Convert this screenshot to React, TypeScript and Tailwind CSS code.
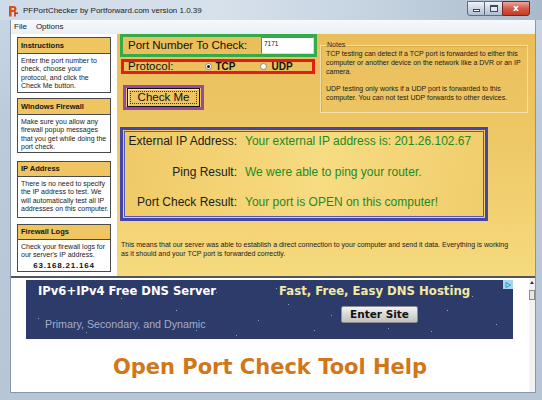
import React from "react";

function TitleIcon() {
  return (
    <svg width="11" height="12" viewBox="0 0 11 12">
      <path d="M1 1h4.5a3 3 0 0 1 0 6H3.6v4.5H1z" fill="#d6501c" />
      <path d="M3.6 3h1.7a1 1 0 0 1 0 2H3.6z" fill="#f6d4a8" />
      <path d="M7 6.5v5M7 8.2h3" stroke="#b8361a" strokeWidth="1.6" fill="none" />
    </svg>
  );
}

function SideBox({
  title,
  headH,
  bodyH,
  lines,
  extra,
  className,
}: {
  title: string;
  headH: number;
  bodyH: number;
  lines: string[];
  extra?: React.ReactNode;
  className?: string;
}) {
  return (
    <div className={"w-[94px] border border-[#4a4a4a] flex flex-col " + (className ?? "")}>
      <div
        className="bg-[#efc562] border-b border-[#4a4a4a] flex items-center pl-[3px] text-[7.5px] font-bold text-[#151515] whitespace-nowrap"
        style={{ height: headH }}
      >
        {title}
      </div>
      <div
        className="bg-white pl-[3px] pt-[3px] text-[7px] leading-[8.3px] text-[#1a1a1a] whitespace-nowrap"
        style={{ height: bodyH }}
      >
        {lines.map((l, i) => (
          <div key={i}>{l}</div>
        ))}
        {extra}
      </div>
    </div>
  );
}

const stars: [number, number][] = [
  [95, 18], [150, 30], [190, 12], [232, 40], [262, 24], [305, 35], [331, 9], [362, 48],
  [421, 30], [446, 16], [470, 44], [60, 52], [121, 46], [405, 51], [288, 50], [210, 55],
  [170, 50], [250, 8], [12, 38], [478, 8],
];

export default function App() {
  return (
    <div className="w-[542px] h-[400px] overflow-hidden flex flex-col bg-[linear-gradient(to_bottom,#c9d7e5,#bccbdb_30%,#b6c6d6)] font-['Liberation_Sans',Arial,sans-serif] text-[#111]">
      {/* Title bar */}
      <div className="h-[20px] flex items-start shrink-0 bg-[linear-gradient(to_right,#cfdbe8,#d7e1ec_40%,#c4d2e0_70%,#a9bacb)]">
        <div className="flex items-center h-[20px] pl-[8px] pt-[2px] gap-[4px] flex-1">
          <TitleIcon />
          <span className="text-[8px] text-[#1b1b1b] whitespace-nowrap">
            PFPortChecker by Portforward.com version 1.0.39
          </span>
        </div>
        <div className="flex mt-[1px] mr-[12px] h-[15px]">
          <div className="w-[18px] h-full rounded-bl-[3px] border border-[#5c6c82] bg-[linear-gradient(to_bottom,#eef3f8,#cdd8e4_50%,#aebfd2)] flex items-end justify-center pb-[3px]">
            <div className="w-[7px] h-[3px] bg-white border border-[#3e4a5c]" />
          </div>
          <div className="w-[17px] h-full border-y border-[#5c6c82] bg-[linear-gradient(to_bottom,#eef3f8,#cdd8e4_50%,#aebfd2)] flex items-center justify-center">
            <div className="w-[8px] h-[7px] border border-[#3e4a5c] border-t-2 bg-white/40" />
          </div>
          <div className="w-[28px] h-full rounded-br-[3px] border border-[#6e2a22] bg-[linear-gradient(to_bottom,#eaa99b,#d65a45_50%,#c43b27)] flex items-center justify-center">
            <span className="text-white text-[9px] font-bold leading-none font-['DejaVu_Sans']">x</span>
          </div>
        </div>
      </div>

      {/* Client area */}
      <div className="ml-[10px] w-[526px] h-[373px] flex flex-col border-l border-r border-b border-[#8596a8] bg-white shrink-0">
        {/* Menu */}
        <div className="h-[14px] flex items-center gap-[9px] pl-[3px] pb-[1px] text-[8px] text-[#1a1a1a] bg-[linear-gradient(to_bottom,#f7f9fb,#eaeff5)] shrink-0">
          <span>File</span>
          <span>Options</span>
        </div>

        {/* Top pane */}
        <div className="h-[242px] flex shrink-0">
          {/* Left column */}
          <div className="w-[106px] bg-white flex flex-col pl-[6px] pt-[3px]">
            <SideBox
              title="Instructions"
              headH={16}
              bodyH={38}
              lines={["Enter the port number to", "check, choose your", "protocol, and click the", "Check Me button."]}
            />
            <SideBox
              className="mt-[5px]"
              title="Windows Firewall"
              headH={16}
              bodyH={37}
              lines={["Make sure you allow any", "firewall popup messages", "that you get while doing the", "port check."]}
            />
            <SideBox
              className="mt-[8px]"
              title="IP Address"
              headH={15}
              bodyH={40}
              lines={["There is no need to specify", "the IP address to test. We", "will automatically test all IP", "addresses on this computer."]}
            />
            <SideBox
              className="mt-[6px]"
              title="Firewall Logs"
              headH={15}
              bodyH={31}
              lines={["Check your firewall logs for", "our server's IP address."]}
              extra={
                <div className="text-center pr-[3px] mt-[2px] text-[8px] font-bold tracking-[0.8px] text-[#111]">
                  63.168.21.164
                </div>
              }
            />
          </div>

          {/* Main golden area */}
          <div className="flex-1 flex flex-col bg-[linear-gradient(to_bottom,#e9be5a,#eec867_45%,#f6da7e)]">
            <div className="flex">
              <div className="flex flex-col pl-[3px] w-[200px]">
                <div className="h-[23px] w-[197px] border-[3px] border-[#34ab4a] flex items-stretch justify-between">
                  <span className="pl-[5px] self-center text-[11.5px] text-[#111] whitespace-nowrap">
                    Port Number To Check:
                  </span>
                  <div className="w-[53px] bg-white border border-[#7a7a7a] border-r-[#dcdcdc] border-b-[#dcdcdc] text-[6.5px] pl-[2px] pt-[3px] leading-none text-[#111]">
                    7171
                  </div>
                </div>
                <div className="mt-[2px] ml-[1px] h-[15px] w-[194px] border-[3px] border-[#e21d1a] flex items-center text-[#111]">
                  <span className="w-[81px] pl-[4px] text-[11.5px] leading-[9px] whitespace-nowrap">Protocol:</span>
                  <div className="w-[7px] h-[7px] rounded-full border border-[#8a8a8a] bg-white flex items-center justify-center">
                    <div className="w-[3px] h-[3px] rounded-full bg-[#111]" />
                  </div>
                  <span className="ml-[3.5px] text-[10px] font-bold leading-[9px]">TCP</span>
                  <div className="ml-[24px] w-[7px] h-[7px] rounded-full border border-[#8a8a8a] bg-white" />
                  <span className="ml-[5px] text-[10px] font-bold leading-[9px]">UDP</span>
                </div>
                <div className="mt-[11px] ml-[3px] h-[25px] w-[81px] border-[3px] border-[#9a4a9e] flex items-center pl-[1px]">
                  <div className="w-[73px] h-[19px] border border-[#111] bg-[#ecc462] shadow-[inset_1px_1px_0_#fbe8b8] p-[2px]">
                    <div className="w-full h-full border border-dotted border-[#333] flex items-center justify-center text-[11.5px] leading-none">
                      Check Me
                    </div>
                  </div>
                </div>
              </div>
              <fieldset className="mt-[7px] ml-[3px] w-[208px] h-[72px] border border-[#f4e0a6] shadow-[inset_1px_1px_0_#d9ad4c] pl-[5px] pt-[1px]">
                <legend className="px-[1px] text-[7px] leading-[8px] text-[#333]">Notes</legend>
                <div className="text-[7px] leading-[8.8px] text-[#1a1a1a] whitespace-nowrap">
                  <div>TCP testing can detect if a TCP port is forwarded to either this</div>
                  <div>computer or another device on the network like a DVR or an IP</div>
                  <div>camera.</div>
                  <div>&nbsp;</div>
                  <div>UDP testing only works if a UDP port is forwarded to this</div>
                  <div>computer. You can not test UDP forwards to other devices.</div>
                </div>
              </fieldset>
            </div>

            <div className="mt-[14px] ml-[3px] w-[368px] h-[94px] border-[3px] border-[#4646aa] p-px">
              <div className="w-full h-full border border-[#5656b4] bg-[linear-gradient(100deg,#efc966,#f7dc82_55%,#f0cd6c)] flex flex-col pt-[1px] gap-[14.5px] text-[12px] leading-[16px]">
                {[
                  ["External IP Address:", "Your external IP address is: 201.26.102.67"],
                  ["Ping Result:", "We were able to ping your router."],
                  ["Port Check Result:", "Your port is OPEN on this computer!"],
                ].map(([l, v]) => (
                  <div key={l} className="flex whitespace-nowrap">
                    <span className="w-[112px] text-right text-[#1c1c1c]">{l}</span>
                    <span className="ml-[8px] text-[#1f8a1f]">{v}</span>
                  </div>
                ))}
              </div>
            </div>

            <div className="mt-[20px] ml-[4px] text-[7px] leading-[8.7px] text-[#1a1a1a] whitespace-nowrap">
              <div>
                This means that our server was able to establish a direct connection to your computer and send it data. Everything is working
              </div>
              <div>as it should and your TCP port is forwarded correctly.</div>
            </div>
          </div>
        </div>

        {/* Splitter */}
        <div className="h-[2px] bg-[#4d5661] shrink-0" />

        {/* Bottom pane */}
        <div className="flex-1 flex bg-white">
          <div className="flex-1 flex flex-col">
            <div className="relative mt-[2px] ml-[15px] w-[487px] h-[59px] bg-[#2d3b6b] flex">
              {stars.map(([x, y], i) => (
                <div
                  key={i}
                  className="absolute w-[1px] h-[1px] bg-[#c8cfe6] opacity-70"
                  style={{ left: x, top: y }}
                />
              ))}
              <div className="absolute right-0 top-0 w-[10px] h-[9px] bg-[#a9d6ea] flex items-center justify-center">
                <svg width="6" height="6" viewBox="0 0 6 6">
                  <path d="M1 0.5L5.5 3L1 5.5z" fill="none" stroke="#2a9ad0" strokeWidth="1" />
                </svg>
              </div>
              <div className="w-[253px] flex flex-col pl-[12px] pt-[3px]">
                <span className="font-['DejaVu_Sans'] font-bold text-[11.6px] leading-[16px] text-white whitespace-nowrap">
                  IPv6+IPv4 Free DNS Server
                </span>
                <span className="mt-[18px] ml-[7px] text-[10.7px] leading-[14px] text-[#a3abc6] whitespace-nowrap">
                  Primary, Secondary, and Dynamic
                </span>
              </div>
              <div className="flex flex-col items-start pt-[3px]">
                <span className="font-['DejaVu_Sans'] font-bold text-[11.7px] leading-[16px] text-[#f2eaa2] whitespace-nowrap">
                  Fast, Free, Easy DNS Hosting
                </span>
                <div className="mt-[7px] ml-[62px] w-[77px] h-[17px] rounded-[2px] border border-[#8c8c8c] bg-[linear-gradient(to_bottom,#f4f4f4,#d8d8d8_50%,#c2c2c2)] flex items-center justify-center">
                  <span className="font-['DejaVu_Sans'] font-bold text-[10.5px] leading-none text-[#111]">Enter Site</span>
                </div>
              </div>
            </div>
            <div className="mt-[15px] text-center font-['DejaVu_Sans'] font-bold text-[21px] leading-[26px] text-[#d0771a] whitespace-nowrap">
              Open Port Check Tool Help
            </div>
          </div>
          <div className="w-[6px] bg-[#f2f2f2] flex flex-col items-center pt-[3px]">
            <div className="w-0 h-0 border-l-[2.5px] border-r-[2.5px] border-b-[3px] border-l-transparent border-r-transparent border-b-[#333]" />
            <div className="mt-[6px] w-[6px] h-[10px] border border-[#8a8a8a] bg-[#e8e8e8]" />
          </div>
        </div>
      </div>
    </div>
  );
}
